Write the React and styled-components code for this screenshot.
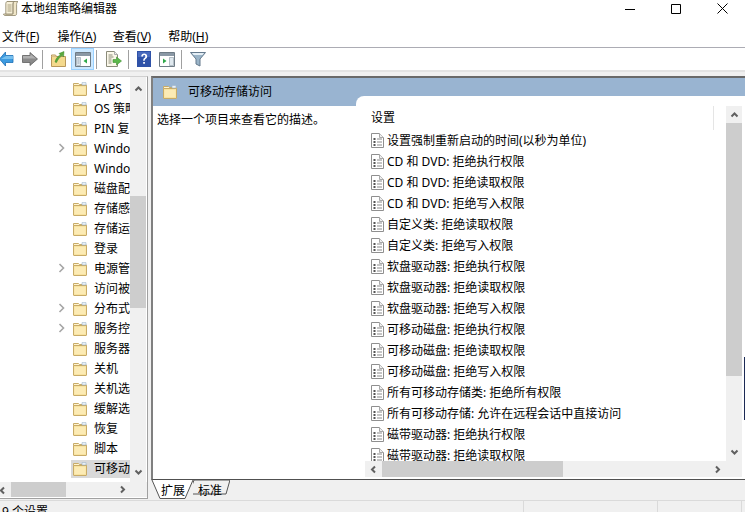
import React from "react";
import styled, { createGlobalStyle } from "styled-components";

const Global = createGlobalStyle`
  html, body { margin: 0; padding: 0; background: #fff; }
  body { font-family: "Noto Sans", "Noto Sans CJK SC", sans-serif; font-size: 12px; color: #000; }
`;

const Page = styled.div`
  width: 745px; height: 512px; overflow: hidden; display: flex; flex-direction: column; background: #fff;
`;
const TitleBar = styled.div`
  height: 26px; display: flex; align-items: flex-start; flex: none;
`;
const AppIcon = styled.svg`
  margin: 1px 2px 0 3px; flex: none;
`;
const TitleText = styled.div`
  line-height: 18px; flex: 1;
`;
const WinButton = styled.div`
  width: 46px; height: 17px; display: flex; align-items: center; justify-content: center;
`;
const MenuBar = styled.div`
  height: 21px; flex: none; display: flex; align-items: center; padding-left: 2px; border-bottom: 1px solid #acacb4; box-sizing: content-box;
`;
const MenuItem = styled.div`
  width: 55.4px; line-height: 20px; u { text-underline-offset: 1px; }
`;
const Toolbar = styled.div`
  height: 22px; flex: none; display: flex; align-items: center;
`;
const ToolButton = styled.div`
  width: ${p => p.$w}px; height: 22px; box-sizing: border-box; flex: none; display: flex; align-items: center;
  justify-content: ${p => p.$start ? "flex-start" : "center"};
  ${p => p.$active && "background: #cce8ff; border: 1px solid #99d1ff;"}
`;
const ToolSep = styled.div`
  width: 1px; height: 19px; background: #a0a0a0; flex: none; margin: 0 ${p => p.$r ?? 2}px 0 ${p => p.$l ?? 2}px;
`;
const Workspace = styled.div`
  flex: 1; min-height: 0; display: flex; background: #f0f0f0; border-top: 2px solid #e3e3e3;
`;
const TreePanel = styled.div`
  width: 148px; height: 423px; margin-top: 4px; box-sizing: border-box; flex: none; display: flex; flex-direction: column;
  background: #fff; border-right: 1px solid #a0a0a0; border-bottom: 1px solid #a0a0a0; border-top: 1px solid #d0d0d0;
`;
const TreeMain = styled.div`
  flex: 1; min-height: 0; display: flex;
`;
const TreeList = styled.div`
  width: 130px; padding-top: 1px; overflow: hidden;
`;
const TreeRow = styled.div`
  height: 20px; display: flex; align-items: center; padding-left: 57px; box-sizing: border-box;
`;
const Twisty = styled.div`
  width: 14px; height: 14px; flex: none; box-sizing: border-box; padding-left: 1px; display: flex; align-items: center;
`;
const NodeBox = styled.div`
  flex: 1; min-width: 0; height: 18px; margin-top: 1px; display: flex; align-items: center; padding-left: 2px; margin-left: 0;
  overflow: hidden; ${p => p.$selected && "background: #d9d9d9;"}
`;
const NodeLabel = styled.span`
  margin-left: 7px; white-space: nowrap; line-height: 18px;
`;
const VScrollBar = styled.div`
  width: 16px; flex: none; background: #f0f0f0; display: flex; flex-direction: column;
  ${p => p.$mt && `margin-top: ${p.$mt}px;`}
  ${p => p.$h && `height: ${p.$h}px;`}
`;
const ScrollBtn = styled.div`
  flex: none; width: ${p => p.$w ?? 16}px; height: ${p => p.$h ?? 17}px; display: flex; align-items: center; justify-content: center;
`;
const ClippedBtn = styled(ScrollBtn)`
  overflow: hidden; justify-content: flex-start; svg { margin-left: -2px; }
`;
const VThumb = styled.div`
  flex: none; height: ${p => p.$h}px; margin-top: ${p => p.$mt ?? 0}px; background: #cdcdcd;
`;
const Grow = styled.div`
  flex: 1;
`;
const HScrollBar = styled.div`
  height: 15px; flex: none; display: flex; background: #f0f0f0; margin: 0 0 1px;
`;
const HThumb = styled.div`
  width: ${p => p.$w}px; flex: none; background: #cdcdcd;
`;
const RightPanel = styled.div`
  flex: 1; min-width: 0; margin: 4px 0 0 3px; display: flex; flex-direction: column;
`;
const ContentFrame = styled.div`
  flex: none; display: flex; flex-direction: column; background: #fff;
  border-top: 2px solid #696969; border-left: 2px solid #808080; border-bottom: 1px solid #505050;
`;
const Band = styled.div`
  height: 18px; box-sizing: border-box; background: #99b4d1; display: flex; align-items: flex-start; padding: 7px 0 0 10px; flex: none;
  position: relative; z-index: 1;
`;
const BandTitle = styled.span`
  margin-left: 11px; line-height: 14px;
`;
const ContentRow = styled.div`
  height: 383px; display: flex;
`;
const DescPane = styled.div`
  width: 203px; flex: none; box-sizing: border-box; border-top: 10px solid #99b4d1; padding: 6px 0 0 4px; line-height: 16px;
`;
const ListPane = styled.div`
  flex: 1; background: linear-gradient(#99b4d1 0 10px, #fff 10px); display: flex; min-width: 0;
`;
const ListInner = styled.div`
  flex: 1; min-width: 0; display: flex; border-top-left-radius: 8px; padding-right: 3px;
  background: linear-gradient(#1c2a55, #1c2a55) right 261px / 1px 63px no-repeat, #fff;
`;
const ListColumn = styled.div`
  width: 370px; flex: none; display: flex; flex-direction: column; padding-top: 10px; box-sizing: border-box;
`;
const ListBody = styled.div`
  height: 355px; overflow: hidden; flex: none;
`;
const ListHeader = styled.div`
  width: 358px; height: 24px; box-sizing: border-box; padding-left: 15px; line-height: 23px; border-right: 1px solid #e5e5e5;
`;
const ListRow = styled.div`
  height: 21px; display: flex; align-items: center; padding-left: 15px; white-space: nowrap;
`;
const RowLabel = styled.span`
  margin-left: 3px; line-height: 21px;
`;
const HScrollList = styled(HScrollBar)`
  height: 16px; margin: 0 0 0 9px;
`;
const TabStrip = styled.div`
  height: 20px; flex: none; display: flex;
`;
const Tab = styled.div`
  position: relative; width: ${p => p.$w}px; height: 20px; flex: none; line-height: 21px; box-sizing: border-box;
  padding-left: ${p => p.$pl}px;
  svg { position: absolute; left: 0; top: 0; }
  span { position: relative; }
`;
const StatusBar = styled.div`
  height: 12px; flex: none; overflow: hidden; display: flex; background: #f0f0f0; border-top: 1px solid #dadada; box-sizing: border-box;
`;
const StatusCell = styled.div`
  width: ${p => p.$w}px; flex: none; box-sizing: border-box; border-right: 1px solid #dadada; padding: 3px 0 0 2px; line-height: 16px; height: 30px;
`;

const Folder = () => (
  <svg width="14" height="14" viewBox="0 0 14 14" style={{ flex: "none" }}>
    <path d="M.5 3.5V13a.5.5 0 0 0 .5.5h12a.5.5 0 0 0 .5-.5V3.5Z" fill="#f8e3a0" stroke="#c8ab68" />
    <path d="M.5 3.5V1.5h5l1 1h6.5l.5 1Z" fill="#fff4cf" stroke="#c8ab68" />
    <path d="M9 .6h4v2.4H9z" fill="#eef3f8" stroke="#9cb4c8" strokeWidth=".6" />
    <path d="M1.5 5h11v7h-11z" fill="#fcebb5" />
  </svg>
);
const Doc = () => (
  <svg width="13" height="15" viewBox="0 0 13 15" style={{ flex: "none" }}>
    <path d="M.5.5h8l4 4v10H.5Z" fill="#fff" stroke="#8f8f8f" />
    <path d="M8.5.5v4h4" fill="#eee" stroke="#a8a8a8" />
    <path d="M2.5 5h2v2h-2zM2.5 8h2v2h-2zM2.5 11h2v2h-2z" fill="#555" />
    <path d="M6 6h5M6 9h5M6 12h5" stroke="#8a8a8a" />
  </svg>
);
const Chevron = ({ dir = "up", color = "#606060", size = 9 }) => {
  const d = { up: "M1.5 6.5 4.5 3.5 7.5 6.5", down: "M1.5 2.5 4.5 5.5 7.5 2.5", left: "M6 1.5 3 4.5 6 7.5", right: "M3 1.5 6 4.5 3 7.5" }[dir];
  return (
    <svg width={size} height={size} viewBox="0 0 9 9">
      <path d={d} fill="none" stroke={color} strokeWidth="2" />
    </svg>
  );
};
const TreeArrow = () => (
  <svg width="8" height="10" viewBox="0 0 8 10">
    <path d="M1.5 1 5.5 5 1.5 9" fill="none" stroke="#a6a6a6" strokeWidth="1.6" />
  </svg>
);

const treeItems = [
  ["LAPS"], ["OS 策略"], ["PIN 复杂性"], ["Windows Hello", 1], ["Windows 登录"], ["磁盘配额"], ["存储感知"],
  ["存储运行状况"], ["登录"], ["电源管理", 1], ["访问被拒绝"], ["分布式", 1], ["服务控制", 1], ["服务器"],
  ["关机"], ["关机选项"], ["缓解选项"], ["恢复"], ["脚本"], ["可移动存储访问"],
];
const rows = [
  "设置强制重新启动的时间(以秒为单位)", "CD 和 DVD: 拒绝执行权限", "CD 和 DVD: 拒绝读取权限", "CD 和 DVD: 拒绝写入权限",
  "自定义类: 拒绝读取权限", "自定义类: 拒绝写入权限", "软盘驱动器: 拒绝执行权限", "软盘驱动器: 拒绝读取权限",
  "软盘驱动器: 拒绝写入权限", "可移动磁盘: 拒绝执行权限", "可移动磁盘: 拒绝读取权限", "可移动磁盘: 拒绝写入权限",
  "所有可移动存储类: 拒绝所有权限", "所有可移动存储: 允许在远程会话中直接访问", "磁带驱动器: 拒绝执行权限", "磁带驱动器: 拒绝读取权限",
];

export default function App() {
  return (
    <Page>
      <Global />
      <TitleBar>
        <AppIcon width="16" height="16" viewBox="0 0 16 16">
          <path d="M4 .5h11c-1 .8-1.4 1.6-1.4 3v9c0 1.2-.6 2-1.6 2H2c-1 0-1.5-.8-1.5-1.5h9c.3 0 .5-.2.5-.5V3c0-1 .6-2 1.3-2.5" fill="#f0e6c8" stroke="#8d8468" strokeWidth=".8" />
          <path d="M4 .5C3 .9 2.8 2 2.8 3v10h7V3c0-1 .5-2 1.3-2.5Z" fill="#f7f0d8" stroke="#8d8468" strokeWidth=".8" />
          <path d="M4.5 4h4M4.5 6h4M4.5 8h4M4.5 10h4" stroke="#a89f80" />
        </AppIcon>
        <TitleText>本地组策略编辑器</TitleText>
        <WinButton>
          <svg width="10" height="10" viewBox="0 0 10 10"><path d="M0 5.5h10" stroke="#000" /></svg>
        </WinButton>
        <WinButton>
          <svg width="10" height="10" viewBox="0 0 10 10"><path d="M.5.5h9v9h-9z" fill="none" stroke="#000" /></svg>
        </WinButton>
        <WinButton>
          <svg width="11" height="11" viewBox="0 0 11 11"><path d="M.5.5l10 10M10.5.5l-10 10" stroke="#000" /></svg>
        </WinButton>
      </TitleBar>
      <MenuBar>
        <MenuItem>文件(<u>F</u>)</MenuItem>
        <MenuItem>操作(<u>A</u>)</MenuItem>
        <MenuItem>查看(<u>V</u>)</MenuItem>
        <MenuItem>帮助(<u>H</u>)</MenuItem>
      </MenuBar>
      <Toolbar>
        <ToolButton $w={19} $start>
          <svg width="14" height="14" viewBox="0 0 14 14">
            <path d="M0 7 6 0V3.5h7.5v7H6V14Z" transform="translate(-.5 0)" fill="#3d9be0" stroke="#1c6fb5" strokeWidth=".8" />
            <path d="M1 7h12V4H6Z" fill="#8fd0f5" opacity=".7" />
          </svg>
        </ToolButton>
        <ToolButton $w={21}>
          <svg width="16" height="14" viewBox="0 0 16 14">
            <path d="M.5 3.5H8V.5L15.5 7 8 13.5v-3H.5Z" fill="#8a8a8a" stroke="#606060" strokeWidth=".8" />
            <path d="M1 4h7.5V2L14 6.500H1Z" fill="#b0b0b0" />
          </svg>
        </ToolButton>
        <ToolSep />
        <ToolButton $w={26}>
          <svg width="15" height="16" viewBox="0 0 15 16">
            <path d="M.5 5.500h14v10H.5Z" fill="#f4d98c" stroke="#b9975a" />
            <path d="M.5 5.500V4h4l1 1.500" fill="#fbeab8" stroke="#b9975a" />
            <path d="M4 11C5 7 7 5 9.500 4L8 2.500 13 .5l-.5 5.500-1.500-1.500C8.500 6.500 6.500 9 5.500 11.500Z" fill="#5aa83c" stroke="#3b8a28" strokeWidth=".5" />
          </svg>
        </ToolButton>
        <ToolButton $w={23} $active>
          <svg width="16" height="15" viewBox="0 0 16 15">
            <path d="M.5.5h15v14H.5Z" fill="#fff" stroke="#6e7b85" />
            <path d="M1 1h14v3H1Z" fill="#8a98a5" />
            <path d="M1.500 5.500h4v8h-4Z" fill="#dfe8ee" stroke="#8a98a5" strokeWidth=".6" />
            <path d="M2.500 7h2M2.500 9h2M2.500 11h2" stroke="#8a98a5" strokeWidth=".8" />
            <path d="M12 6.500v5L8.500 9Z" fill="#2fa84a" />
          </svg>
        </ToolButton>
        <ToolSep $l={2} $r={1} />
        <ToolButton $w={30}>
          <svg width="17" height="16" viewBox="0 0 17 16">
            <path d="M1.500.5h8l3 3v12h-11Z" fill="#fbf8ea" stroke="#8b8b7a" />
            <path d="M9.500.5v3h3" fill="#eee" stroke="#aaa" />
            <path d="M3.500 4h4M3.500 6h5M3.500 8h3M3.500 10h3M3.500 12h3" stroke="#8a8a78" />
            <path d="M8 8.500h3.500V6l5 4-5 4v-2.500H8Z" fill="#5cb84a" stroke="#3e8f30" strokeWidth=".6" />
          </svg>
        </ToolButton>
        <ToolSep $l={0} $r={3} />
        <ToolButton $w={24}>
          <svg width="14" height="16" viewBox="0 0 14 16">
            <path d="M0 0h14v16H0Z" fill="#2f52a8" />
            <path d="M1 1h12v5H1Z" fill="#5b7ccc" opacity=".6" />
            <path d="M4.200 5.500C4.200 3.500 5.500 2.500 7.200 2.500s3 1 3 2.800c0 1.500-.9 2.100-1.700 2.700-.6.500-.8.900-.8 1.700H6.200c0-1.300.4-2 1.100-2.600.6-.5 1-.9 1-1.700 0-.8-.4-1.300-1.100-1.300-.8 0-1.200.6-1.200 1.400ZM6.200 11h1.700v1.800H6.200Z" fill="#fff" />
          </svg>
        </ToolButton>
        <ToolButton $w={22}>
          <svg width="16" height="15" viewBox="0 0 16 15">
            <path d="M.5.5h15v14H.5Z" fill="#fff" stroke="#6e7b85" />
            <path d="M1 1h14v3H1Z" fill="#8a98a5" />
            <path d="M10.500 5.500h4v8h-4Z" fill="#dfe8ee" stroke="#8a98a5" strokeWidth=".6" />
            <path d="M4 6.500v5L7.500 9Z" fill="#2fa84a" />
          </svg>
        </ToolButton>
        <ToolSep $l={3} $r={3} />
        <ToolButton $w={26}>
          <svg width="16" height="16" viewBox="0 0 16 16">
            <path d="M.5 1.500h15L10 8v7l-4-2V8Z" fill="#9ab4c8" stroke="#64798c" />
            <path d="M2 2h12l-1.500 2h-9Z" fill="#e4eef5" />
          </svg>
        </ToolButton>
      </Toolbar>
      <Workspace>
        <TreePanel>
          <TreeMain>
            <TreeList>
              {treeItems.map(([label, arrow], i) => (
                <TreeRow key={i}>
                  <Twisty>{arrow && <TreeArrow />}</Twisty>
                  <NodeBox $selected={i === treeItems.length - 1}>
                    <Folder />
                    <NodeLabel>{label}</NodeLabel>
                  </NodeBox>
                </TreeRow>
              ))}
            </TreeList>
            <VScrollBar>
              <ScrollBtn $h={22}><Chevron dir="up" /></ScrollBtn>
              <VThumb $mt={97} $h={112} />
              <Grow />
              <ScrollBtn $h={20}><Chevron dir="down" /></ScrollBtn>
            </VScrollBar>
          </TreeMain>
          <HScrollBar>
            <ClippedBtn $w={11}><Chevron dir="left" /></ClippedBtn>
            <HThumb $w={55} />
            <Grow />
            <ScrollBtn $w={17} $h={15}><Chevron dir="right" /></ScrollBtn>
            <ScrollBtn $w={16} $h={15} />
          </HScrollBar>
        </TreePanel>
        <RightPanel>
          <ContentFrame>
            <Band>
              <Folder />
              <BandTitle>可移动存储访问</BandTitle>
            </Band>
            <ContentRow>
              <DescPane>选择一个项目来查看它的描述。</DescPane>
              <ListPane>
                <ListInner>
                  <ListColumn>
                    <ListBody>
                      <ListHeader>设置</ListHeader>
                      {rows.map((r, i) => (
                        <ListRow key={i}><Doc /><RowLabel>{r}</RowLabel></ListRow>
                      ))}
                    </ListBody>
                    <HScrollList>
                      <ScrollBtn $w={17} $h={16}><Chevron dir="left" /></ScrollBtn>
                      <HThumb $w={181} />
                      <Grow />
                      <ScrollBtn $w={17} $h={16}><Chevron dir="right" /></ScrollBtn>
                    </HScrollList>
                  </ListColumn>
                  <VScrollBar $mt={10} $h={371}>
                    <ScrollBtn><Chevron dir="up" /></ScrollBtn>
                    <VThumb $h={253} />
                    <Grow />
                    <ScrollBtn><Chevron dir="down" /></ScrollBtn>
                    <ScrollBtn $h={16} />
                  </VScrollBar>
                </ListInner>
              </ListPane>
            </ContentRow>
          </ContentFrame>
          <TabStrip>
            <Tab $w={42} $pl={10}>
              <svg width="42" height="20" viewBox="0 0 42 20">
                <path d="M1 0 9 18.500H34L42 0" fill="#fff" stroke="#555" />
              </svg>
              <span>扩展</span>
            </Tab>
            <Tab $w={37} $pl={5}>
              <svg width="37" height="20" viewBox="0 0 37 20">
                <path d="M-4 14 1 0H37L33 14H-2" fill="#f0f0f0" stroke="#555" />
              </svg>
              <span>标准</span>
            </Tab>
          </TabStrip>
        </RightPanel>
      </Workspace>
      <StatusBar>
        <StatusCell $w={524}>9 个设置</StatusCell>
        <StatusCell $w={134} />
        <StatusCell $w={84} />
      </StatusBar>
    </Page>
  );
}
